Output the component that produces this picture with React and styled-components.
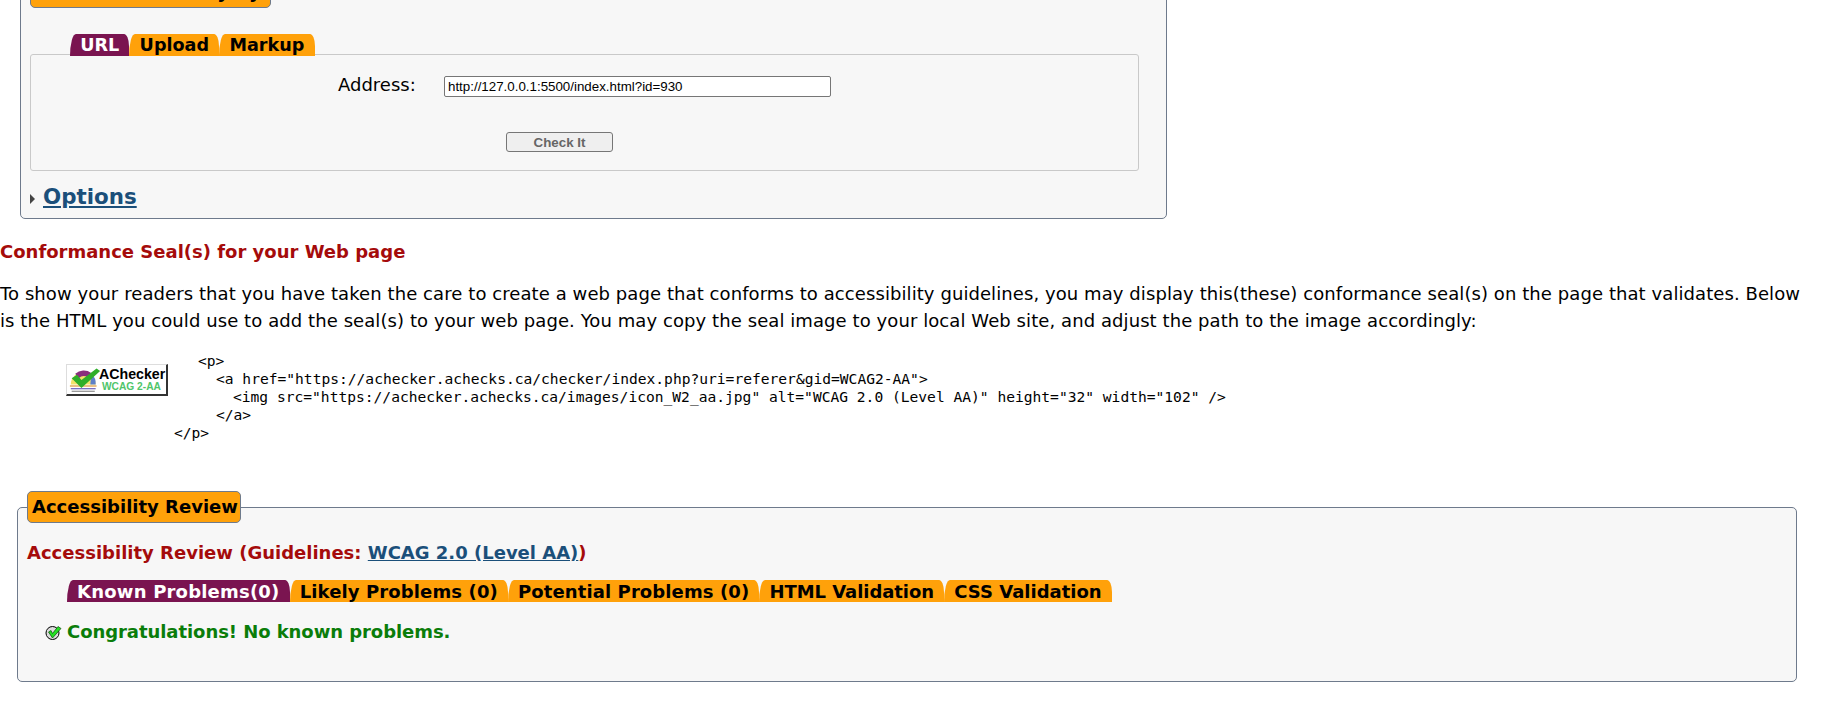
import React from 'react';
import styled, { createGlobalStyle } from 'styled-components';

const GlobalStyle = createGlobalStyle`
  html, body {
    margin: 0;
    padding: 0;
    background: #fff;
    overflow: hidden;
  }
  body {
    font-family: "DejaVu Sans", Verdana, sans-serif;
    color: #000;
  }
`;

const INPUT_TABS = [
  { label: 'URL', active: true },
  { label: 'Upload' },
  { label: 'Markup' },
];

const REVIEW_TABS = [
  { label: 'Known Problems(0)', active: true, spacing: 0.2 },
  { label: 'Likely Problems (0)', spacing: 0.12 },
  { label: 'Potential Problems (0)', spacing: 0.1 },
  { label: 'HTML Validation', spacing: -0.05 },
  { label: 'CSS Validation', spacing: 0 },
];

const CODE_LINES = [
  { indent: 24, text: '<p>' },
  { indent: 42, text: '<a href="https://achecker.achecks.ca/checker/index.php?uri=referer&gid=WCAG2-AA">' },
  { indent: 59, text: '<img src="https://achecker.achecks.ca/images/icon_W2_aa.jpg" alt="WCAG 2.0 (Level AA)" height="32" width="102" />' },
  { indent: 42, text: '</a>' },
  { indent: 0, text: '</p>' },
];

const Seal = () => (
  <SealBox>
    <SealMark viewBox="0 0 36 30" aria-hidden="true">
      <path d="M2 20 A14 14 0 0 1 30 20 Z" fill="#f3e26a" />
      <path d="M7 8 A14 14 0 0 1 25 7 L21 12 A8 8 0 0 0 11 13 Z" fill="#8a2f7d" />
      <path d="M25 8 A14 14 0 0 1 30 20 L24 20 Z" fill="#5d7fc9" />
      <rect x="1" y="21" width="30" height="1.5" fill="#e2a24a" />
      <rect x="2" y="24" width="28" height="1.5" fill="#7a6fc0" />
      <rect x="3" y="27" width="26" height="1.5" fill="#9a9a9a" />
      <path d="M3 13 L9 9 L14 15 L31 2 L35 5 L14 24 Z" fill="#2fae2a" />
    </SealMark>
    <SealText>
      <SealName>AChecker</SealName>
      <SealLevel>WCAG 2-AA</SealLevel>
    </SealText>
  </SealBox>
);

const SuccessIcon = () => (
  <svg width="17" height="17" viewBox="0 0 17 17" aria-hidden="true">
    <circle cx="7.5" cy="9" r="6.5" fill="#dcdcdc" stroke="#000" strokeWidth="1" />
    <path d="M3.5 8 L6 6.5 L7.5 9.5 L13 2.5 L16 4.5 L7.5 14 Z" fill="#22e022" stroke="#0a4a0a" strokeWidth="0.7" />
  </svg>
);

const App = () => (
  <Page>
    <GlobalStyle />
    <CheckPanel>
      <PanelLegend>Check Accessibility By:</PanelLegend>
      <TabRow>
        {INPUT_TABS.map(tab => (
          <Tab key={tab.label} $active={tab.active}>
            {tab.label}
          </Tab>
        ))}
      </TabRow>
      <InputBox>
        <AddressRow>
          <AddressLabel htmlFor="address">Address:</AddressLabel>
          <AddressInput
            id="address"
            type="text"
            readOnly
            value="http://127.0.0.1:5500/index.html?id=930"
          />
        </AddressRow>
        <ButtonRow>
          <CheckButton type="button">Check It</CheckButton>
        </ButtonRow>
      </InputBox>
      <OptionsRow>
        <Arrow />
        <OptionsLink href="#options">Options</OptionsLink>
      </OptionsRow>
    </CheckPanel>

    <SectionTitle>Conformance Seal(s) for your Web page</SectionTitle>
    <Intro>
      To show your readers that you have taken the care to create a web page that conforms to
      accessibility guidelines, you may display this(these) conformance seal(s) on the page that
      validates. Below is the HTML you could use to add the seal(s) to your web page. You may copy
      the seal image to your local Web site, and adjust the path to the image accordingly:
    </Intro>
    <SealRow>
      <Seal />
      <Code>
        {CODE_LINES.map(line => (
          <CodeLine key={line.text} $indent={line.indent}>
            {line.text}
          </CodeLine>
        ))}
      </Code>
    </SealRow>

    <ReviewPanel>
      <PanelLegend>Accessibility Review</PanelLegend>
      <ReviewTitle>
        Accessibility Review (Guidelines: <ReviewLink href="#wcag">WCAG 2.0 (Level AA)</ReviewLink>)
      </ReviewTitle>
      <ReviewTabs>
        {REVIEW_TABS.map(tab => (
          <ReviewTab key={tab.label} $active={tab.active} $spacing={tab.spacing}>
            {tab.label}
          </ReviewTab>
        ))}
      </ReviewTabs>
      <Success>
        <SuccessIcon />
        Congratulations! No known problems.
      </Success>
    </ReviewPanel>
  </Page>
);

const Page = styled.div`
  height: 715px;
  overflow: hidden;
  width: 1822px;
`;

const Panel = styled.fieldset`
  background: #f7f7f7;
  border: 1px solid #6e7a8c;
  border-radius: 5px;
  box-sizing: border-box;
  margin: 0;
  min-width: 0;
`;

const CheckPanel = styled(Panel)`
  height: 243px;
  margin: -24px 0 0 20px;
  padding: 0 27px 0 9px;
  width: 1147px;
`;

const PanelLegend = styled.legend`
  background: #ffa10a;
  border: 1px solid #6e7a8c;
  border-radius: 5px;
  box-sizing: border-box;
  font-size: 18px;
  font-weight: bold;
  height: 32px;
  line-height: 30px;
  padding: 0 2px 0 4px;
  white-space: nowrap;
`;

const TabRow = styled.div`
  display: flex;
  margin-top: 26px;
  padding-left: 40px;
  position: relative;
  z-index: 1;
`;

const ReviewTabs = styled(TabRow)`
  margin-top: 16px;
`;

const Tab = styled.div`
  background: ${props => (props.$active ? '#7a1450' : '#ffa10a')};
  border-radius: 6px 5px 0 0 / 22px 12px 0 0;
  color: ${props => (props.$active ? '#fff' : '#000')};
  font-size: 17.6px;
  font-weight: bold;
  height: 22px;
  line-height: 23px;
  padding: 0 10.2px;
  white-space: nowrap;
`;

const ReviewTab = styled(Tab)`
  font-size: 18px;
  letter-spacing: ${props => props.$spacing}px;
  padding: 0 10.1px;
`;

const InputBox = styled.div`
  border: 1px solid #c9c9c9;
  border-radius: 3px;
  box-sizing: border-box;
  height: 117px;
  margin-top: -2px;
  padding-top: 19px;
`;

const AddressRow = styled.div`
  align-items: center;
  display: flex;
  padding-left: 307px;
`;

const AddressLabel = styled.label`
  font-size: 18px;
  margin-bottom: 3px;
  width: 106px;
`;

const AddressInput = styled.input`
  border: 1px solid #767676;
  border-radius: 2px;
  box-sizing: border-box;
  color: #000;
  font-family: "Liberation Sans", Arial, sans-serif;
  font-size: 13.33px;
  height: 21px;
  outline: none;
  padding: 1px 3px;
  width: 387px;
`;

const ButtonRow = styled.div`
  display: flex;
  margin-top: 34px;
  padding-left: 475px;
`;

const CheckButton = styled.button`
  background: #efefef;
  border: 1px solid #767676;
  border-radius: 3px;
  color: #666;
  font-family: "Liberation Sans", Arial, sans-serif;
  font-size: 13.33px;
  font-weight: bold;
  height: 20px;
  padding: 0;
  width: 107px;
`;

const OptionsRow = styled.div`
  align-items: center;
  display: flex;
  gap: 8px;
  margin-top: 13px;
`;

const Arrow = styled.span`
  border-bottom: 5px solid transparent;
  border-left: 5px solid #444;
  border-top: 5px solid transparent;
  height: 0;
  margin-top: 4px;
  width: 0;
`;

const OptionsLink = styled.a`
  color: #1b4f7a;
  font-size: 21.4px;
  font-weight: bold;
`;

const SectionTitle = styled.h3`
  color: #a50b0b;
  font-size: 18px;
  font-weight: bold;
  line-height: 22px;
  margin: 22px 0 0;
`;

const Intro = styled.p`
  font-size: 18px;
  letter-spacing: 0.08px;
  line-height: 27px;
  margin: 17px 0 0;
  width: 1805px;
`;

const SealRow = styled.div`
  align-items: flex-start;
  display: flex;
  margin-top: 18px;
  padding-left: 66px;
`;

const SealBox = styled.div`
  align-items: center;
  background: #fff;
  border: 1px solid #ddd;
  border-bottom: 2px solid #333;
  border-right: 2px solid #333;
  box-sizing: border-box;
  display: flex;
  height: 32px;
  margin-top: 12px;
  width: 102px;
`;

const SealMark = styled.svg`
  flex: none;
  height: 28px;
  margin-left: 2px;
  width: 32px;
`;

const SealText = styled.div`
  display: flex;
  flex-direction: column;
  font-family: "Liberation Sans", Arial, sans-serif;
  font-weight: bold;
  margin-left: -2px;
`;

const SealName = styled.span`
  font-size: 14.2px;
  line-height: 14px;
`;

const SealLevel = styled.span`
  color: #4fc56a;
  font-size: 10.2px;
  line-height: 11px;
  margin-left: 3px;
`;

const Code = styled.div`
  font-family: "DejaVu Sans Mono", monospace;
  font-size: 14.6px;
  line-height: 18px;
  margin-left: 6px;
`;

const CodeLine = styled.div`
  padding-left: ${props => props.$indent}px;
  white-space: pre;
`;

const ReviewPanel = styled(Panel)`
  height: 191px;
  margin: 49px 0 0 17px;
  padding: 0 9px;
  width: 1780px;
`;

const ReviewTitle = styled.h3`
  color: #a50b0b;
  font-size: 18px;
  font-weight: bold;
  line-height: 22px;
  margin: 19px 0 0;
`;

const ReviewLink = styled.a`
  color: #1b4f7a;
  text-decoration: underline;
`;

const Success = styled.div`
  align-items: center;
  color: #0a7d0a;
  display: flex;
  font-size: 18px;
  font-weight: bold;
  gap: 5px;
  letter-spacing: -0.06px;
  line-height: 22px;
  margin: 19px 0 0 18px;
`;

export default App;
